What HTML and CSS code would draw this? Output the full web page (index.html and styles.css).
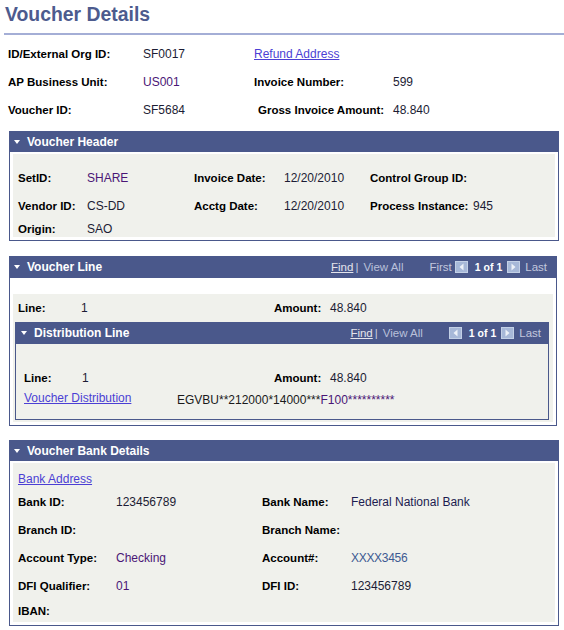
FILE: index.html
```html
<!DOCTYPE html>
<html>
<head>
<meta charset="utf-8">
<title>Voucher Details</title>
<link rel="stylesheet" href="styles.css">
</head>
<body>
<h1 class="title">Voucher Details</h1>

<div class="top">
  <span class="lbl">ID/External Org ID:</span><span class="val">SF0017</span><a class="link" href="#">Refund Address</a><span></span>
  <span class="lbl">AP Business Unit:</span><span class="val p">US001</span><span class="lbl">Invoice Number:</span><span class="val">599</span>
  <span class="lbl">Voucher ID:</span><span class="val">SF5684</span><span class="lbl ind">Gross Invoice Amount:</span><span class="val">48.840</span>
</div>

<section class="box hdr-box">
  <div class="bar bar-s"><span class="tri"></span><span class="bar-title">Voucher Header</span></div>
  <div class="body">
    <div class="inner hdr-grid">
      <span class="lbl">SetID:</span><span class="val p">SHARE</span><span class="lbl">Invoice Date:</span><span class="val">12/20/2010</span><span class="lbl">Control Group ID:</span><span class="val"></span>
      <span class="lbl">Vendor ID:</span><span class="val">CS-DD</span><span class="lbl">Acctg Date:</span><span class="val">12/20/2010</span><span class="lbl">Process Instance:</span><span class="val">945</span>
      <span class="lbl">Origin:</span><span class="val">SAO</span><span></span><span></span><span></span><span></span>
    </div>
  </div>
</section>

<section class="box line-box">
  <div class="bar">
    <span class="tri"></span><span class="bar-title">Voucher Line</span>
    <span class="nav nav-line">
      <a class="find" href="#">Find</a><span class="sep">|</span><span class="va">View All</span>
      <span class="first">First</span>
      <svg class="ic" width="13" height="12" viewBox="0 0 13 12"><rect width="13" height="12" fill="#a7b8d8"/><rect x="0.5" y="0.5" width="12" height="11" fill="none" stroke="#c3d0e6"/><path d="M8.5 2.5 L4.5 6 L8.5 9.5 Z" fill="#edf1f8"/></svg>
      <span class="cnt">1 of 1</span>
      <svg class="ic ic-r" width="13" height="12" viewBox="0 0 13 12"><rect width="13" height="12" fill="#a7b8d8"/><rect x="0.5" y="0.5" width="12" height="11" fill="none" stroke="#c3d0e6"/><path d="M4.5 2.5 L8.5 6 L4.5 9.5 Z" fill="#edf1f8"/></svg>
      <span class="last">Last</span>
    </span>
  </div>
  <div class="body">
    <div class="inner line-inner">
      <div class="line-row">
        <span class="lbl">Line:</span><span class="val">1</span><span class="lbl">Amount:</span><span class="val">48.840</span>
      </div>
      <div class="sub">
        <div class="bar sub-bar">
          <span class="tri"></span><span class="bar-title">Distribution Line</span>
          <span class="nav nav-dist">
            <a class="find" href="#">Find</a><span class="sep">|</span><span class="va">View All</span>
            <svg class="ic ic-first" width="13" height="12" viewBox="0 0 13 12"><rect width="13" height="12" fill="#a7b8d8"/><rect x="0.5" y="0.5" width="12" height="11" fill="none" stroke="#c3d0e6"/><path d="M8.5 2.5 L4.5 6 L8.5 9.5 Z" fill="#edf1f8"/></svg>
            <span class="cnt">1 of 1</span>
            <svg class="ic ic-r" width="13" height="12" viewBox="0 0 13 12"><rect width="13" height="12" fill="#a7b8d8"/><rect x="0.5" y="0.5" width="12" height="11" fill="none" stroke="#c3d0e6"/><path d="M4.5 2.5 L8.5 6 L4.5 9.5 Z" fill="#edf1f8"/></svg>
            <span class="last">Last</span>
          </span>
        </div>
        <div class="sub-body">
          <div class="dist-row">
            <span class="lbl">Line:</span><span class="val">1</span><span class="lbl">Amount:</span><span class="val">48.840</span>
          </div>
          <div class="dist-link-row">
            <a class="link dist-link" href="#">Voucher Distribution</a><span class="val chart">EGVBU**212000*14000***<span class="p">F100**********</span></span>
          </div>
        </div>
      </div>
    </div>
  </div>
</section>

<section class="box bank-box">
  <div class="bar bar-s"><span class="tri"></span><span class="bar-title">Voucher Bank Details</span></div>
  <div class="body">
    <div class="inner bank-inner">
      <div class="bank-link-row"><a class="link" href="#">Bank Address</a></div>
      <div class="bank-grid">
        <span class="lbl">Bank ID:</span><span class="val">123456789</span><span class="lbl">Bank Name:</span><span class="val n">Federal National Bank</span>
        <span class="lbl">Branch ID:</span><span class="val"></span><span class="lbl">Branch Name:</span><span class="val"></span>
        <span class="lbl">Account Type:</span><span class="val p">Checking</span><span class="lbl">Account#:</span><span class="val acct">XXXX3456</span>
        <span class="lbl">DFI Qualifier:</span><span class="val p">01</span><span class="lbl">DFI ID:</span><span class="val">123456789</span>
        <span class="lbl">IBAN:</span><span class="val"></span><span></span><span></span>
      </div>
    </div>
  </div>
</section>
</body>
</html>
```

FILE: styles.css
```css
* { box-sizing: border-box; }

body {
  margin: 0;
  width: 564px;
  background: #ffffff;
  font-family: "Liberation Sans", Arial, sans-serif;
  font-size: 12px;
  color: #000;
}

.title {
  margin: 2px 0 0 4px;
  padding: 0 0 7px 1px;
  font-size: 19.4px;
  line-height: 24px;
  font-weight: bold;
  color: #4d5b8e;
  border-bottom: 2px solid #a4aed6;
}

.lbl { font-weight: bold; font-size: 11.5px; color: #000; white-space: nowrap; }
.val { color: #1c1c34; white-space: nowrap; }
.p { color: #4a1676; }
.n { color: #1c1c50; }
.acct { color: #3d5a92; letter-spacing: -0.3px; }
.ind { padding-left: 4px; }

a.link {
  color: #4b3fd4;
  text-decoration: underline;
}

.top {
  display: grid;
  grid-template-columns: 135px 111px 139px 1fr;
  grid-auto-rows: 28px;
  align-items: center;
  margin: 5px 0 0 8px;
}

/* Section boxes */
.box { margin-left: 9px; width: 550px; }
.hdr-box { margin-top: 7px; }
.line-box { margin-top: 15px; width: 548px; }
.bank-box { margin-top: 14px; }

.bar {
  height: 22px;
  background: #4a588b;
  display: flex;
  align-items: center;
  color: #fff;
  padding-left: 5px;
}
.bar-s { height: 21px; }
.tri {
  width: 0;
  height: 0;
  border-left: 3px solid transparent;
  border-right: 3px solid transparent;
  border-top: 4px solid #fff;
  margin-right: 7px;
}
.bar-title { font-weight: bold; flex: 1; white-space: nowrap; }

.body {
  border: 1px solid #4a588b;
  border-top: 0;
  padding: 2px 3px 3px;
}
.inner { background: #f0f1ec; }

/* Voucher Header */
.hdr-grid {
  display: grid;
  grid-template-columns: 69px 107px 90px 86px 103px 1fr;
  grid-template-rows: 28px 28px 17px;
  align-items: center;
  padding: 10px 0 0 5px;
}

/* Voucher Line */
.line-inner { padding: 0 4px 2px 2px; }
.line-row {
  display: grid;
  grid-template-columns: 63px 193px 56px 1fr;
  height: 28px;
  align-items: center;
  margin: 14px 0 0 3px;
}

.nav {
  display: flex;
  align-items: center;
  white-space: nowrap;
  font-size: 11.5px;
}
.nav-line { padding-right: 10px; }
.nav-dist { padding-right: 8px; }
.find { color: #e4e4ec; text-decoration: underline; }
.sep { color: #c9cee0; margin: 0 5px 0 2px; }
.va { color: #b9c0da; }
.first { color: #c3c8de; margin-left: 26px; margin-right: 3px; }
.ic { display: block; }
.ic-first { margin-left: 26px; }
.cnt { color: #fff; font-weight: bold; font-size: 10.5px; margin: 0 5px 0 7px; }
.last { color: #c3c8de; margin-left: 5px; }

.sub-bar { padding-left: 6px; }
.sub-body {
  border: 1px solid #4a588b;
  border-top: 0;
  background: #f0f1ec;
  padding: 22px 0 13px 8px;
}
.dist-row {
  display: grid;
  grid-template-columns: 58px 192px 56px 1fr;
  height: 24px;
  align-items: center;
}
.dist-link-row {
  display: flex;
  height: 16px;
  line-height: 16px;
}
.dist-link { width: 153px; }
.chart { margin-top: 2px; color: #1a1a1a; }

/* Bank */
.bank-inner { padding: 7px 0 0 5px; }
.bank-link-row { height: 18px; line-height: 18px; }
.bank-grid {
  display: grid;
  grid-template-columns: 98px 146px 89px 1fr;
  grid-template-rows: 28px 28px 28px 28px 22px;
  align-items: center;
}
```
